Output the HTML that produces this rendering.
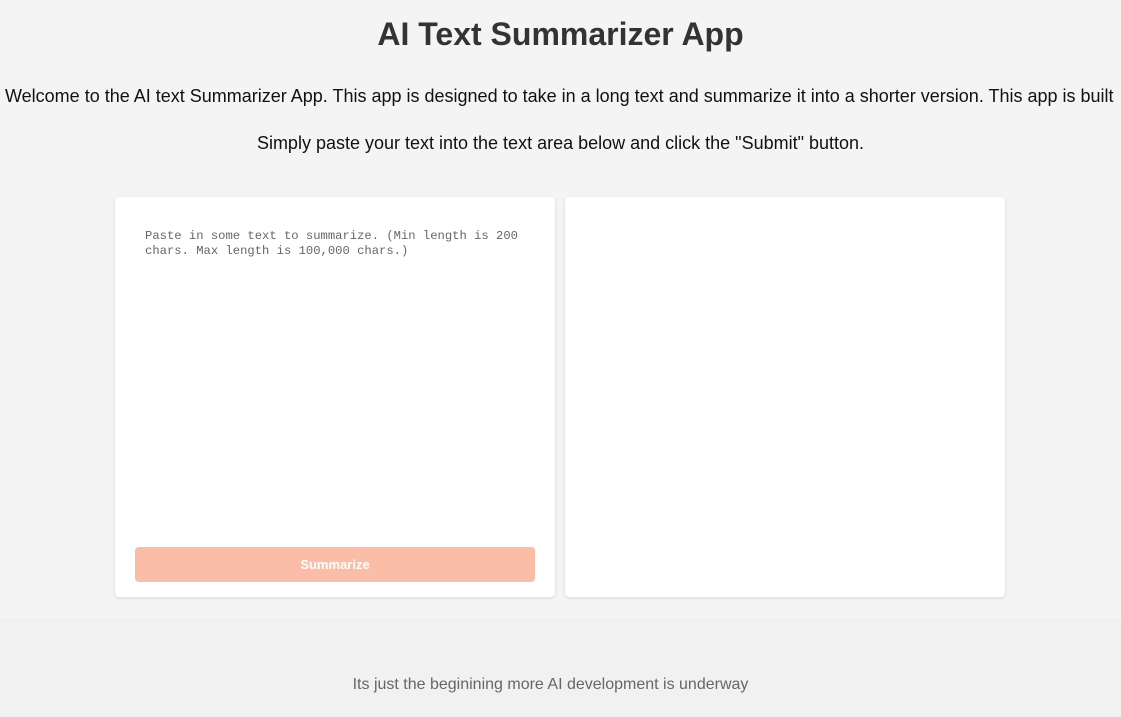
<!DOCTYPE html>
<html><head><style>
html,body{margin:0;padding:0;width:1121px;height:717px;overflow:hidden;background:#f4f4f4;font-family:"Liberation Sans",Arial,sans-serif}
h1{position:absolute;top:15px;left:0;width:1121px;text-align:center;margin:0;font-size:32px;font-weight:bold;color:#333;line-height:38px}
.p{position:absolute;font-size:18px;color:#111;white-space:nowrap;line-height:22px}
.card{position:absolute;top:197px;width:440px;height:400px;background:#fff;border-radius:4px;box-shadow:0 1px 3px rgba(0,0,0,0.12)}
.ph{position:absolute;left:30px;top:32px;font-family:"Liberation Mono",monospace;font-size:12.2px;line-height:15px;color:#666;white-space:pre}
.btn{position:absolute;left:20px;top:350px;width:400px;height:35px;background:#f9bda8;border-radius:4px;color:#fff;font-weight:bold;font-size:13px;text-align:center;line-height:35px}
.foot{position:absolute;top:618px;left:0;width:1121px;height:99px;background:#f1f1f1}
.foot div{position:absolute;top:58px;left:-10px;width:100%;text-align:center;color:#666;font-size:16px}
</style></head><body>
<h1>AI Text Summarizer App</h1>
<div class="p" style="left:5px;top:85px">Welcome to the AI text Summarizer App. This app is designed to take in a long text and summarize it into a shorter version. This app is built</div>
<div class="p" style="left:0;width:1121px;text-align:center;top:132px">Simply paste your text into the text area below and click the "Submit" button.</div>
<div class="card" style="left:115px"><div class="ph">Paste in some text to summarize. (Min length is 200
chars. Max length is 100,000 chars.)</div><div class="btn">Summarize</div></div>
<div class="card" style="left:565px"></div>
<div class="foot"><div>Its just the beginining more AI development is underway</div></div>
</body></html>
